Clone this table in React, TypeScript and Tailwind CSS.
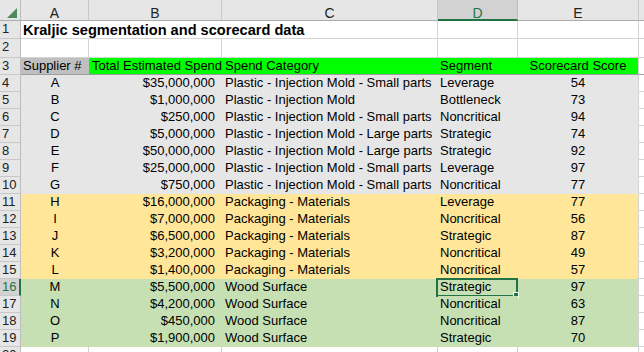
import React from "react";

const font = { fontFamily: '"Liberation Sans", Arial, sans-serif' };

type Row = [string, string, string, string, string, string];

const rows: Row[] = [
  ["4", "A", "$35,000,000", "Plastic - Injection Mold - Small parts", "Leverage", "54"],
  ["5", "B", "$1,000,000", "Plastic - Injection Mold", "Bottleneck", "73"],
  ["6", "C", "$250,000", "Plastic - Injection Mold - Small parts", "Noncritical", "94"],
  ["7", "D", "$5,000,000", "Plastic - Injection Mold - Large parts", "Strategic", "74"],
  ["8", "E", "$50,000,000", "Plastic - Injection Mold - Large parts", "Strategic", "92"],
  ["9", "F", "$25,000,000", "Plastic - Injection Mold - Small parts", "Leverage", "97"],
  ["10", "G", "$750,000", "Plastic - Injection Mold - Small parts", "Noncritical", "77"],
  ["11", "H", "$16,000,000", "Packaging - Materials", "Leverage", "77"],
  ["12", "I", "$7,000,000", "Packaging - Materials", "Noncritical", "56"],
  ["13", "J", "$6,500,000", "Packaging - Materials", "Strategic", "87"],
  ["14", "K", "$3,200,000", "Packaging - Materials", "Noncritical", "49"],
  ["15", "L", "$1,400,000", "Packaging - Materials", "Noncritical", "57"],
  ["16", "M", "$5,500,000", "Wood Surface", "Strategic", "97"],
  ["17", "N", "$4,200,000", "Wood Surface", "Noncritical", "63"],
  ["18", "O", "$450,000", "Wood Surface", "Noncritical", "87"],
  ["19", "P", "$1,900,000", "Wood Surface", "Strategic", "70"],
];

function fillFor(n: number) {
  if (n <= 10) return "bg-[#e7e6e6] border-[#e7e6e6]";
  if (n <= 15) return "bg-[#ffe699] border-[#ffe699]";
  return "bg-[#c6e0b4] border-[#c6e0b4]";
}

function RowHead({ n, selected }: { n: string; selected?: boolean }) {
  return (
    <div
      className={
        selected
          ? "w-[21px] shrink-0 border-b border-r-2 border-b-[#c8c8c8] border-r-[#217346] bg-[#d2d2d2] pl-[2px] text-[#217346]"
          : "w-[21px] shrink-0 border-b border-r border-b-[#c8c8c8] border-r-[#bdbdbd] bg-[#e6e6e6] pl-[2px] text-[#222]"
      }
    >
      {n}
    </div>
  );
}

function ColHead({ w, label, selected }: { w: string; label: string; selected?: boolean }) {
  return (
    <div
      className={
        selected
          ? `${w} shrink-0 border-b-2 border-r border-b-[#217346] border-r-[#bdbdbd] bg-[#d2d2d2] pt-[5px] text-center text-[14px] text-[#217346]`
          : `${w} shrink-0 border-b border-r border-b-[#ababab] border-r-[#c8c8c8] bg-[#e6e6e6] pt-[5px] text-center text-[14px] text-[#222]`
      }
    >
      {label}
    </div>
  );
}

export default function App() {
  return (
    <div
      className="h-[352px] w-[644px] overflow-hidden bg-white text-[13px] leading-[16px] text-black"
      style={font}
    >
      {/* column headers */}
      <div className="flex h-[21px]">
        <div className="relative w-[21px] shrink-0 border-b border-r border-b-[#ababab] border-r-[#bdbdbd] bg-[#e6e6e6]">
          <svg className="absolute left-[7px] top-[8px]" width="10" height="10" viewBox="0 0 10 10">
            <polygon points="10,0 10,10 0,10" fill="#4f8a5d" />
          </svg>
        </div>
        <ColHead w="w-[68px]" label="A" />
        <ColHead w="w-[133px]" label="B" />
        <ColHead w="w-[216px]" label="C" />
        <ColHead w="w-[80px]" label="D" selected />
        <ColHead w="w-[121px]" label="E" />
        <div className="flex-1 border-b border-b-[#ababab] bg-[#e6e6e6]" />
      </div>

      {/* row 1 */}
      <div className="flex h-[18px]">
        <RowHead n="1" />
        <div className="w-[417px] shrink-0 whitespace-nowrap border-b border-r border-[#d4d4d4] pl-[2px] pt-[2px] text-[14.6px] font-bold leading-[15px]">
          Kraljic segmentation and scorecard data
        </div>
        <div className="w-[80px] shrink-0 border-b border-r border-[#d4d4d4]" />
        <div className="w-[121px] shrink-0 border-b border-r border-[#d4d4d4]" />
        <div className="flex-1 border-b border-[#d4d4d4]" />
      </div>

      {/* row 2 */}
      <div className="flex h-[19px]">
        <RowHead n="2" />
        <div className="w-[68px] shrink-0 border-b border-r border-[#d4d4d4]" />
        <div className="w-[133px] shrink-0 border-b border-r border-[#d4d4d4]" />
        <div className="w-[216px] shrink-0 border-b border-r border-[#d4d4d4]" />
        <div className="w-[80px] shrink-0 border-b border-r border-[#d4d4d4]" />
        <div className="w-[121px] shrink-0 border-b border-r border-[#d4d4d4]" />
        <div className="flex-1 border-b border-[#d4d4d4]" />
      </div>

      {/* row 3: headings */}
      <div className="flex h-[17px]">
        <RowHead n="3" />
        <div className="w-[68px] shrink-0 whitespace-nowrap border-b border-b-[#9e9e9e] bg-[#bfbfbf] pl-[2px]">
          Supplier #
        </div>
        <div className="w-[133px] shrink-0 overflow-hidden whitespace-nowrap border-b border-b-[#9e9e9e] bg-[#00ff00] pl-[3px]">
          Total Estimated Spend
        </div>
        <div className="w-[216px] shrink-0 whitespace-nowrap border-b border-b-[#9e9e9e] bg-[#00ff00] pl-[3px]">
          Spend Category
        </div>
        <div className="w-[80px] shrink-0 whitespace-nowrap border-b border-b-[#9e9e9e] bg-[#00ff00] pl-[2px]">
          Segment
        </div>
        <div className="w-[121px] shrink-0 whitespace-nowrap border-b border-r border-b-[#9e9e9e] border-r-[#d4d4d4] bg-[#00ff00] text-center">
          Scorecard Score
        </div>
        <div className="flex-1 border-b border-b-[#9e9e9e]" />
      </div>

      {rows.map(([n, sup, spend, cat, seg, score]) => {
        const num = Number(n);
        const fill = fillFor(num);
        const sel = num === 16;
        return (
          <div key={n} className="flex h-[17px]">
            <RowHead n={n} selected={sel} />
            <div className={`w-[68px] shrink-0 border-b text-center ${fill}`}>{sup}</div>
            <div className={`w-[133px] shrink-0 border-b pr-[7px] text-right ${fill}`}>{spend}</div>
            <div className={`w-[216px] shrink-0 whitespace-nowrap border-b pl-[3px] ${fill}`}>{cat}</div>
            <div className={`relative w-[80px] shrink-0 whitespace-nowrap border-b pl-[2px] ${fill}`}>
              {seg}
              {sel && (
                <div className="absolute left-[-2px] top-[-1px] h-[19px] w-[82px] border-2 border-[#217346]">
                  <div className="absolute left-[75px] top-[12px] h-[6px] w-[6px] border border-white bg-[#217346]" />
                </div>
              )}
            </div>
            <div className={`w-[120px] shrink-0 border-b text-center ${fill}`}>{score}</div>
            <div className="w-px shrink-0 bg-[#d4d4d4]" />
            <div className="flex-1 border-b border-[#d4d4d4]" />
          </div>
        );
      })}

      {/* row 20 */}
      <div className="flex h-[17px]">
        <RowHead n="20" />
        <div className="w-[68px] shrink-0 border-b border-r border-[#d4d4d4]" />
        <div className="w-[133px] shrink-0 border-b border-r border-[#d4d4d4]" />
        <div className="w-[216px] shrink-0 border-b border-r border-[#d4d4d4]" />
        <div className="w-[80px] shrink-0 border-b border-r border-[#d4d4d4]" />
        <div className="w-[121px] shrink-0 border-b border-r border-[#d4d4d4]" />
        <div className="flex-1 border-b border-[#d4d4d4]" />
      </div>
    </div>
  );
}
